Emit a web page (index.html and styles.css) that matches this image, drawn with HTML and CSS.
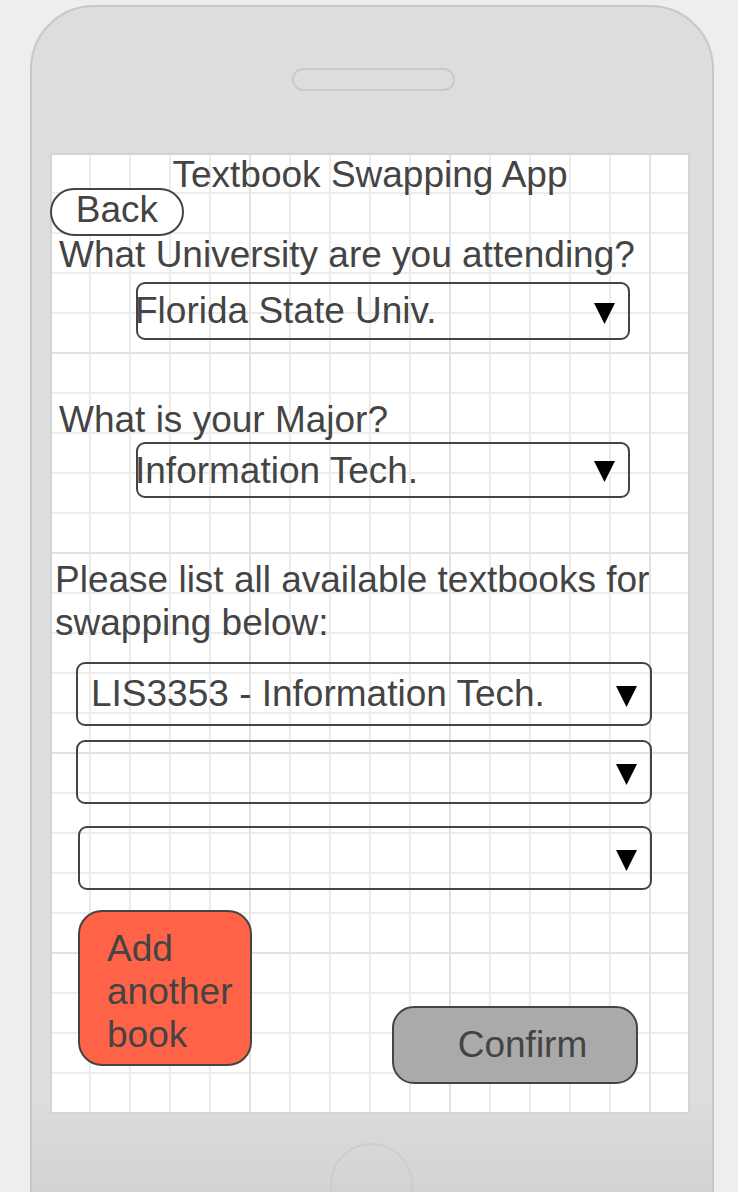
FILE: index.html
```html
<!DOCTYPE html>
<html lang="en">
<head>
<meta charset="utf-8">
<title>Textbook Swapping App</title>
<link rel="stylesheet" href="styles.css">
</head>
<body>
<div class="phone">
  <div class="speaker"></div>
  <div class="screen">
    <h1 class="title">Textbook Swapping App</h1>
    <button class="back">Back</button>

    <p class="question q-uni">What University are you attending?</p>
    <div class="select select-short select-uni">
      <span class="select-value">Florida State Univ.</span>
      <svg class="arrow" viewBox="0 0 21 21"><polygon points="0,0 21,0 10.5,21"/></svg>
    </div>

    <p class="question q-major">What is your Major?</p>
    <div class="select select-short select-major">
      <span class="select-value">Information Tech.</span>
      <svg class="arrow" viewBox="0 0 21 21"><polygon points="0,0 21,0 10.5,21"/></svg>
    </div>

    <p class="question q-books">Please list all available textbooks for swapping below:</p>
    <div class="select select-book book-1">
      <span class="select-value">LIS3353 - Information Tech.</span>
      <svg class="arrow" viewBox="0 0 21 21"><polygon points="0,0 21,0 10.5,21"/></svg>
    </div>
    <div class="select select-book book-2">
      <span class="select-value"></span>
      <svg class="arrow" viewBox="0 0 21 21"><polygon points="0,0 21,0 10.5,21"/></svg>
    </div>
    <div class="select select-book book-3">
      <span class="select-value"></span>
      <svg class="arrow" viewBox="0 0 21 21"><polygon points="0,0 21,0 10.5,21"/></svg>
    </div>

    <div class="actions">
      <button class="add">Add another book</button>
      <button class="confirm">Confirm</button>
    </div>
  </div>
  <div class="home"></div>
</div>
</body>
</html>
```

FILE: styles.css
```css
* {
  box-sizing: border-box;
}

html,
body {
  margin: 0;
  height: 1192px;
  overflow: hidden;
}

body {
  background: #eeeeee;
  font-family: "Liberation Sans", Arial, sans-serif;
  font-size: 37px;
  color: #444444;
}

.phone {
  margin: 5px 0 0 30px;
  width: 684px;
  height: 1260px;
  padding-top: 61px;
  border: 2px solid #c8c8c8;
  border-radius: 64px 64px 0 0;
  background: linear-gradient(to bottom, #dddddd 0, #dddddd 1090px, #cfcfcf 1220px);
}

.speaker {
  margin-left: 260px;
  width: 163px;
  height: 23px;
  border: 2px solid #cacaca;
  border-radius: 12px;
}

.screen {
  margin: 62px 0 0 18px;
  width: 640px;
  height: 961px;
  border: 2px solid #d4d4d4;
  background-color: #ffffff;
  background-image:
    linear-gradient(to right, #e2e2e2 2px, transparent 2px),
    linear-gradient(to bottom, #e2e2e2 2px, transparent 2px),
    linear-gradient(to right, #ececec 2px, transparent 2px),
    linear-gradient(to bottom, #ececec 2px, transparent 2px);
  background-size: 200px 100%, 100% 200px, 40px 100%, 100% 40px;
  background-position: 197px 0, 0 197px, 37px 0, 0 37px;
}

.title {
  margin: 0;
  font-size: 37px;
  font-weight: normal;
  line-height: 40px;
  text-align: center;
}

button {
  font: inherit;
  color: inherit;
  padding: 0;
  margin: 0;
  cursor: pointer;
}

.back {
  display: flex;
  align-items: center;
  justify-content: center;
  margin: -7px 0 0 -2px;
  width: 134px;
  height: 48px;
  padding-bottom: 5px;
  border: 2px solid #444444;
  border-radius: 24px;
  background: #ffffff;
  line-height: 38px;
}

.question {
  margin: 0;
  line-height: 36px;
  padding-left: 7px;
}

.q-uni {
  margin-top: 1px;
}

.q-major {
  margin-top: 62px;
}

.q-books {
  margin-top: 60px;
  line-height: 43px;
  padding-left: 3px;
}

.select {
  display: flex;
  align-items: center;
  justify-content: space-between;
  border: 2px solid #444444;
  border-radius: 9px;
  line-height: 40px;
}

.select-short {
  margin-left: 84px;
  width: 494px;
}

.select-short .select-value {
  margin-left: -3px;
}

.select-uni {
  margin-top: 9px;
  height: 58px;
}

.select-major {
  margin-top: 4px;
  height: 56px;
  padding-top: 2px;
}

.select-book {
  height: 64px;
  padding-left: 13px;
}

.book-1 {
  margin: 18px 0 0 24px;
  width: 576px;
}

.book-2 {
  margin: 14px 0 0 24px;
  width: 576px;
}

.book-3 {
  margin: 22px 0 0 26px;
  width: 574px;
}

.arrow {
  flex-shrink: 0;
  width: 21px;
  height: 21px;
  margin: 4px 13px 0 0;
  fill: #000000;
}

.select-major .arrow {
  margin-top: 0;
}

.actions {
  display: flex;
  align-items: flex-start;
  margin-top: 20px;
}

.add {
  display: flex;
  align-items: flex-start;
  margin-left: 26px;
  width: 174px;
  height: 156px;
  padding: 15px 8px 0 27px;
  border: 2px solid #444444;
  border-radius: 24px;
  background: #ff6347;
  line-height: 43px;
  text-align: left;
}

.confirm {
  display: flex;
  align-items: center;
  justify-content: center;
  margin: 96px 0 0 140px;
  width: 246px;
  height: 78px;
  padding-left: 15px;
  border: 2px solid #444444;
  border-radius: 22px;
  background: #aaaaaa;
  line-height: 40px;
}

.home {
  margin: 29px 0 0 298px;
  width: 83px;
  height: 83px;
  border: 2px solid #cdcdcd;
  border-radius: 50%;
}
```
